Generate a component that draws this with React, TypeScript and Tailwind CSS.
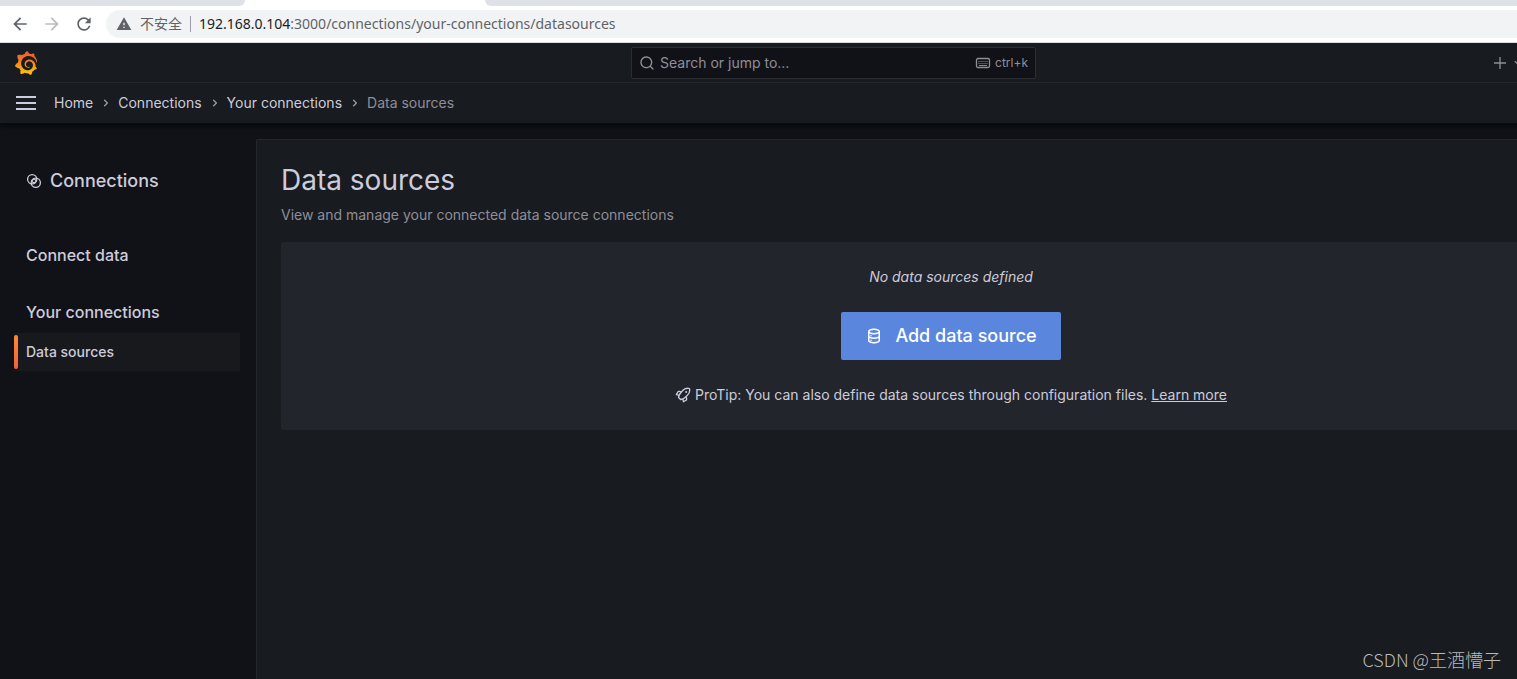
import { MdArrowBack, MdArrowForward, MdRefresh, MdWarning } from "react-icons/md";
import { SiGrafana } from "react-icons/si";

const crumbs = ["Home", "Connections", "Your connections"];

const paths = {
  search:
    "M21.71,20.29,18,16.61A9,9,0,1,0,16.61,18l3.68,3.68a1,1,0,0,0,1.42,0A1,1,0,0,0,21.71,20.29ZM11,18a7,7,0,1,1,7-7A7,7,0,0,1,11,18Z",
  angle:
    "M14.83,11.29,10.59,7.05a1,1,0,0,0-1.42,0,1,1,0,0,0,0,1.41L12.71,12,9.17,15.54a1,1,0,0,0,0,1.41,1,1,0,0,0,.71.29,1,1,0,0,0,.71-.29l4.24-4.24A1,1,0,0,0,14.83,11.29Z",
  database:
    "M8,16.5a1,1,0,1,0,1,1A1,1,0,0,0,8,16.5ZM12,2C8,2,4,3.37,4,6V18c0,2.63,4,4,8,4s8-1.37,8-4V6C20,3.37,16,2,12,2Zm6,16c0,.71-2.28,2-6,2s-6-1.29-6-2V14.73A13.16,13.16,0,0,0,12,16a13.16,13.16,0,0,0,6-1.27Zm0-6c0,.71-2.28,2-6,2s-6-1.29-6-2V8.73A13.16,13.16,0,0,0,12,10a13.16,13.16,0,0,0,6-1.27ZM12,8C8.28,8,6,6.71,6,6s2.28-2,6-2,6,1.29,6,2S15.72,8,12,8ZM8,10.5a1,1,0,1,0,1,1A1,1,0,0,0,8,10.5Z",
  rocket:
    "M22.601 2.062a1 1 0 0 0-.713-.713A11.252 11.252 0 0 0 10.47 4.972L9.354 6.296 6.75 5.668a2.777 2.777 0 0 0-3.387 1.357l-2.2 3.9a1 1 0 0 0 .661 1.469l3.073.659a13.42 13.42 0 0 0-.555 2.434 1 1 0 0 0 .284.836l3.1 3.1a1 1 0 0 0 .708.293c.028 0 .057-.001.086-.004a12.169 12.169 0 0 0 2.492-.49l.644 3.004a1 1 0 0 0 1.469.661l3.905-2.202a3.035 3.035 0 0 0 1.375-3.304l-.668-2.76 1.237-1.137A11.204 11.204 0 0 0 22.6 2.062ZM3.572 10.723l1.556-2.76a.826.826 0 0 1 1.07-.375l1.718.416-.65.772a13.095 13.095 0 0 0-1.59 2.398Zm12.47 8.222-2.715 1.532-.43-2.005a11.34 11.34 0 0 0 2.414-1.62l.743-.683.404 1.664a1.041 1.041 0 0 1-.416 1.112Zm1.615-6.965-3.685 3.386a9.773 9.773 0 0 1-5.17 2.304l-2.405-2.404a10.932 10.932 0 0 1 2.401-5.206l1.679-1.993a.964.964 0 0 0 .078-.092L11.99 6.27a9.278 9.278 0 0 1 8.81-3.12 9.218 9.218 0 0 1-3.143 8.829Zm-.923-6.164a1.5 1.5 0 1 0 1.5 1.5 1.5 1.5 0 0 0-1.5-1.5Z",
};

function Icon({ name, className }: { name: keyof typeof paths; className: string }) {
  return (
    <svg viewBox="0 0 24 24" fill="currentColor" aria-hidden="true" className={className}>
      <path d={paths[name]} />
    </svg>
  );
}

function KeyboardIcon() {
  return (
    <svg viewBox="0 0 16 16" fill="none" stroke="currentColor" aria-hidden="true" className="size-4">
      <rect x="1.5" y="3.5" width="13" height="9" rx="1.5" strokeWidth="1.3" />
      <path d="M3.5 6.5h1m1 0h1m1 0h1m1 0h1m1 0h1M3.5 8.5h1m1 0h1m1 0h1m1 0h1m1 0h1M4 10.5h8" />
    </svg>
  );
}

function LinkedCirclesIcon() {
  return (
    <svg viewBox="0 0 16 16" fill="none" stroke="currentColor" strokeWidth="1.3" aria-hidden="true" className="size-4">
      <circle cx="6.2" cy="6.2" r="4.6" />
      <circle cx="9.8" cy="9.8" r="4.6" />
      <path d="M8 5.6 10.4 8 8 10.4 5.6 8Z" strokeLinejoin="round" />
    </svg>
  );
}

function BrowserChrome() {
  return (
    <div className="relative z-20 border-b border-[#dadce0] bg-white">
      <div className="flex h-1.5">
        <div className="w-[245px] rounded-br-md bg-[#dee1e6]" />
        <div className="w-60" />
        <div className="flex-1 rounded-bl-md bg-[#dee1e6]" />
      </div>
      <div className="flex h-9 items-center pl-2.5">
        <div className="flex w-24 gap-3 text-[#5f6368]">
          <button aria-label="Back">
            <MdArrowBack className="size-5" />
          </button>
          <button aria-label="Forward" className="text-[#babcbe]">
            <MdArrowForward className="size-5" />
          </button>
          <button aria-label="Reload">
            <MdRefresh className="size-5" />
          </button>
        </div>
        <div className="flex h-7 flex-1 items-center rounded-l-full bg-[#f1f3f4] pl-2.5 font-['Noto_Sans','Noto_Sans_CJK_SC',sans-serif] text-sm text-[#5f6368]">
          <MdWarning className="size-4" />
          <span className="ml-2">不安全</span>
          <span className="mx-2 h-4 w-px bg-[#9aa0a6]" />
          <span>
            <span className="text-[#202124]">192.168.0.104</span>:3000/connections/your-connections/datasources
          </span>
        </div>
      </div>
    </div>
  );
}

function TopBar() {
  return (
    <header className="relative z-10 bg-[#181b1f] shadow-[0_1px_8px_0_#010409]">
      <div className="flex h-10 items-center border-b border-[#25272c] px-3.5">
        <div className="flex flex-1">
          <a href="#home" aria-label="Grafana">
            <SiGrafana className="size-6" fill="url(#flame)" />
            <svg aria-hidden="true" className="absolute size-0">
              <linearGradient id="flame" x1="0" y1="0" x2="0" y2="1">
                <stop offset="0" stopColor="#f05a28" />
                <stop offset="0.4" stopColor="#f37a26" />
                <stop offset="1" stopColor="#fbca0a" />
              </linearGradient>
            </svg>
          </a>
        </div>
        <label className="flex h-8 w-[405px] items-center rounded-xs border border-[#2c2e33] bg-[#111217] px-[7px] text-[#8e8e99]">
          <Icon name="search" className="size-4" />
          <input
            aria-label="Search or jump to"
            placeholder="Search or jump to..."
            className="ml-[5px] min-w-0 flex-1 bg-transparent text-sm outline-none placeholder:text-[#8e8e99]"
          />
          <KeyboardIcon />
          <span className="ml-1 text-xs">ctrl+k</span>
        </label>
        <div className="flex-1">
          <div className="flex justify-end pr-[127px] text-[#8e8e99]">
            <button aria-label="New" className="flex items-center gap-0.5">
              <svg viewBox="0 0 16 16" stroke="currentColor" strokeWidth="1.3" aria-hidden="true" className="size-4">
                <path d="M8 2v12M2 8h12" />
              </svg>
              <Icon name="angle" className="size-4 rotate-90" />
            </button>
          </div>
        </div>
      </div>
      <div className="flex h-10 items-center px-4">
        <button aria-label="Open menu" className="mr-[18px] flex w-5 flex-col gap-1">
          <span className="h-0.5 w-full bg-[#ccccdc]" />
          <span className="h-0.5 w-full bg-[#ccccdc]" />
          <span className="h-0.5 w-full bg-[#ccccdc]" />
        </button>
        <nav aria-label="Breadcrumbs" className="flex items-center text-sm">
          {crumbs.map((crumb) => (
            <span key={crumb} className="flex items-center">
              <a href="#crumb">{crumb}</a>
              <Icon name="angle" className="mr-1 ml-[5px] size-4 text-[#9a9aa6]" />
            </span>
          ))}
          <span className="text-[#8e8e99]">Data sources</span>
        </nav>
      </div>
    </header>
  );
}

function Sidebar() {
  return (
    <aside className="w-64 shrink-0 pt-[46px] pr-4 pl-3.5 font-medium">
      <h2 className="flex items-center gap-2 pl-3 text-lg leading-6">
        <LinkedCirclesIcon />
        Connections
      </h2>
      <nav aria-label="Connections" className="flex flex-col pt-[50px]">
        <a href="#connect-data" className="pl-3 text-base">
          Connect data
        </a>
        <a href="#your-connections" className="mt-[33px] pl-3 text-base">
          Your connections
        </a>
        <a href="#data-sources" aria-current="page" className="mt-[9px] flex h-[38px] items-center rounded-xs bg-[#18191d] text-sm">
          <span className="mr-2 h-[34px] w-1 rounded-xs bg-linear-to-b from-[#ff8833] to-[#f55f3e]" />
          Data sources
        </a>
      </nav>
    </aside>
  );
}

export default function App() {
  return (
    <div className="relative flex min-h-screen flex-col overflow-hidden bg-[#111217] font-[Inter,sans-serif] text-[#ccccdc]">
      <BrowserChrome />
      <div className="-mr-[150px] flex flex-1 flex-col">
        <TopBar />
        <div className="flex flex-1">
          <Sidebar />
          <main className="mt-4 flex-1 rounded-tl-xs border-t border-l border-[#25272c] bg-[#181b1f] pt-5 pr-[46px] pl-6">
            <h1 className="text-[28px] leading-10">Data sources</h1>
            <p className="mt-1 text-sm leading-[22px] text-[#8e8e99]">View and manage your connected data source connections</p>
            <section className="mt-4 flex flex-col items-center rounded-xs bg-[#22252b] py-6 text-sm">
              <p className="leading-[22px] italic">No data sources defined</p>
              <button className="my-6 flex h-12 items-center rounded-xs bg-[#5a86de] px-6 text-lg font-medium text-white">
                <Icon name="database" className="mr-3 size-[18px]" />
                Add data source
              </button>
              <p className="flex items-center leading-[22px]">
                <Icon name="rocket" className="mr-1 size-4" />
                <span>
                  ProTip: You can also define data sources through configuration files.{" "}
                  <a href="#learn-more" className="underline">
                    Learn more
                  </a>
                </span>
              </p>
            </section>
          </main>
        </div>
      </div>
      <div className="absolute right-4 bottom-2 font-['Noto_Sans_CJK_SC',sans-serif] text-lg leading-6 font-light text-[#b9babc]">
        CSDN @王酒懵子
      </div>
    </div>
  );
}
